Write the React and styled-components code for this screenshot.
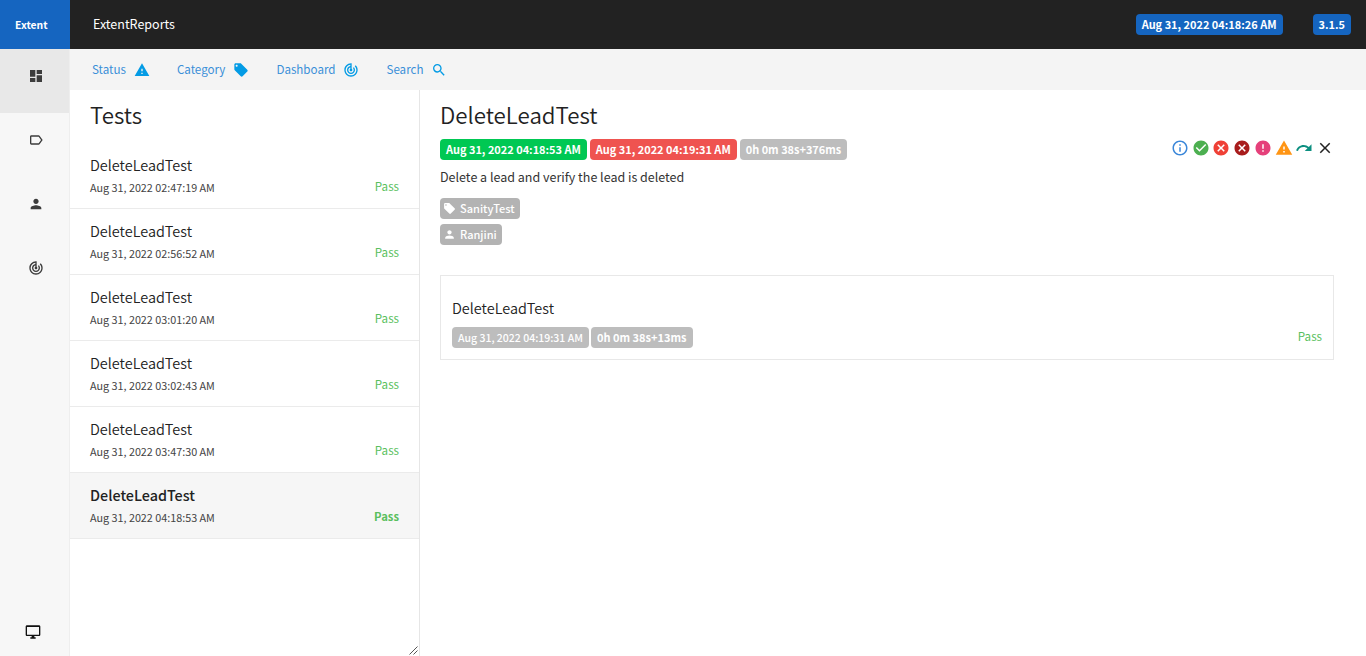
import React from 'react';
import styled, { createGlobalStyle } from 'styled-components';
import {
  MdDashboard, MdLabelOutline, MdPerson, MdTrackChanges, MdWarning,
  MdLocalOffer, MdSearch, MdInfoOutline, MdCheckCircle, MdCancel, MdError, MdRedo, MdClose,
} from 'react-icons/md';

const GlobalStyle = createGlobalStyle`
  *, *::before, *::after { box-sizing: border-box; }
  body {
    margin: 0;
    background: #fff;
    color: #222;
    font-family: "Noto Sans CJK SC", "Open Sans", sans-serif;
    font-size: 12.5px;
    overflow: hidden;
  }
  h1, h2, p, ul { margin: 0; padding: 0; font-weight: 400; list-style: none; }
  svg { display: block; flex: none; }
`;

const Page = styled.div`
  display: flex;
  flex-direction: column;
  height: 656px;
`;

const TopBar = styled.header`
  display: flex;
  align-items: center;
  height: 49px;
  flex: none;
  padding-right: 15px;
  background: #222;
  color: #fff;
`;

const Logo = styled.div`
  width: 70px;
  height: 49px;
  padding-left: 15px;
  background: #1565c0;
  font-size: 10.35px;
  font-weight: 700;
  line-height: 50px;
`;

const ReportName = styled.div`
  flex: 1;
  padding-left: 23px;
  font-size: 12.5px;
  line-height: 47px;
  height: 49px;
`;

const Badge = styled.span`
  display: inline-flex;
  align-items: center;
  height: 21px;
  padding: 0 6px;
  border-radius: 4px;
  background: ${(p) => p.$bg || '#bdbdbd'};
  color: #fff;
  font-size: ${(p) => p.$size || 10.95}px;
  font-weight: ${(p) => p.$weight || 700};
  line-height: 21px;
  white-space: nowrap;
`;

const TopBadges = styled.div`
  display: flex;
  gap: 30px;
`;

const Body = styled.div`
  display: flex;
  flex: 1;
  min-height: 0;
`;

const SideNav = styled.nav`
  display: flex;
  flex-direction: column;
  width: 70px;
  flex: none;
  background: #f7f7f7;
  border-right: 1px solid #eee;
  color: #3c3c3c;
`;

const SideItem = styled.a`
  display: flex;
  justify-content: center;
  height: 64px;
  padding: 19px 0 0 3px;
  background: ${(p) => (p.$active ? '#e8e8e8' : 'transparent')};
`;

const ThemeToggle = styled.a`
  margin-top: auto;
  padding: 0 0 16px 25px;
  color: #111;
`;

const Main = styled.main`
  display: flex;
  flex-direction: column;
  flex: 1;
  min-width: 0;
`;

const SubNav = styled.nav`
  display: flex;
  gap: 27px;
  height: 41px;
  flex: none;
  padding-left: 22px;
  background: #f4f4f4;
`;

const SubNavLink = styled.a`
  display: flex;
  height: 41px;
  align-items: center;
  gap: 8px;
  color: #3a8fd8;
  font-size: 11.6px;
  line-height: 39px;
  padding-bottom: 1px;

  svg { color: #039be5; margin-top: 2px; }
`;

const Columns = styled.div`
  display: flex;
  flex: 1;
  min-height: 0;
`;

const TestColumn = styled.section`
  position: relative;
  width: 350px;
  flex: none;
  border-right: 1px solid #e6e6e6;
`;

const ResizeGrip = styled.svg`
  position: absolute;
  right: 1px;
  bottom: 1px;
`;

const Heading = styled.h1`
  font-size: 22.3px;
  font-weight: 350;
  line-height: 34px;
`;

const TestsHeading = styled(Heading)`
  padding: 7px 20px 12px;
`;

const TestRow = styled.li`
  display: flex;
  justify-content: space-between;
  height: 66px;
  padding: 11px 20px 0;
  border-bottom: 1px solid #ebebeb;
  background: ${(p) => (p.$active ? '#f6f6f6' : '#fff')};
  font-weight: ${(p) => (p.$active ? 500 : 350)};
`;

const TestName = styled.div`
  font-size: ${(p) => (p.$active ? 14.35 : 14.45)}px;
  line-height: 22px;
`;

const TestTime = styled.div`
  color: #444;
  font-size: 10.79px;
  font-weight: 400;
  line-height: 22px;
`;

const Status = styled.span`
  align-self: flex-end;
  color: #5abf5e;
  font-size: ${(p) => (p.$active ? 11.3 : 11.6)}px;
  font-weight: ${(p) => (p.$active ? 700 : 400)};
  line-height: 20px;
`;

const RowStatus = styled(Status)`
  margin-bottom: 12px;
`;

const Details = styled.section`
  flex: 1;
  min-width: 0;
  padding: 7px 32px 0 20px;
`;

const MetaRow = styled.div`
  display: flex;
  align-items: center;
  justify-content: space-between;
  height: 21px;
  margin-top: 8px;
`;

const Badges = styled.div`
  display: flex;
  gap: ${(p) => p.$gap || 3}px;
`;

const StatusFilters = styled.div`
  display: flex;
  align-items: center;
  gap: 2.75px;
  margin: -3px 0 0;
`;

const Description = styled.p`
  margin-top: 6px;
  color: #333;
  font-size: 12.5px;
  line-height: 21px;
`;

const TagList = styled.div`
  display: flex;
  flex-direction: column;
  align-items: flex-start;
  gap: 5px;
  margin-top: 11px;
`;

const Tag = styled(Badge)`
  gap: 4px;
  padding: 0 5px 0 3px;
`;

const NodeCard = styled.article`
  display: flex;
  justify-content: space-between;
  height: 85px;
  margin-top: 30px;
  padding: 21px 11px 0;
  border: 1px solid #e8e8e8;
`;

const NodeName = styled.div`
  margin-bottom: 8px;
  font-size: 14.45px;
  font-weight: 350;
  line-height: 22px;
`;

const NodeStatus = styled(Status)`
  margin-bottom: 13px;
`;

const MonitorIcon = () => (
  <svg width="16" height="16" viewBox="0 0 24 24" fill="currentColor">
    <path d="M21 2H3c-1.1 0-2 .9-2 2v12c0 1.1.9 2 2 2h7v2H8v2h8v-2h-2v-2h7c1.1 0 2-.9 2-2V4c0-1.1-.9-2-2-2zm0 14H3V4.5h18V16z" />
  </svg>
);

const tests = [
  'Aug 31, 2022 02:47:19 AM',
  'Aug 31, 2022 02:56:52 AM',
  'Aug 31, 2022 03:01:20 AM',
  'Aug 31, 2022 03:02:43 AM',
  'Aug 31, 2022 03:47:30 AM',
  'Aug 31, 2022 04:18:53 AM',
];

const filters = [
  [MdInfoOutline, '#3b87d9'],
  [MdCheckCircle, '#4caf50'],
  [MdCancel, '#ef4036'],
  [MdCancel, '#a81c1c'],
  [MdError, '#e5407a'],
  [MdWarning, '#ff9514'],
  [MdRedo, '#0c8f80'],
  [MdClose, '#222'],
];

export default function App() {
  return (
    <Page>
      <GlobalStyle />
      <TopBar>
        <Logo>Extent</Logo>
        <ReportName>ExtentReports</ReportName>
        <TopBadges>
          <Badge $bg="#1565c0">Aug 31, 2022 04:18:26 AM</Badge>
          <Badge $bg="#1565c0">3.1.5</Badge>
        </TopBadges>
      </TopBar>
      <Body>
        <SideNav>
          <SideItem $active><MdDashboard size={16} /></SideItem>
          <SideItem><MdLabelOutline size={16} /></SideItem>
          <SideItem><MdPerson size={16} /></SideItem>
          <SideItem><MdTrackChanges size={16} /></SideItem>
          <ThemeToggle><MonitorIcon /></ThemeToggle>
        </SideNav>
        <Main>
          <SubNav>
            <SubNavLink>Status <MdWarning size={16} /></SubNavLink>
            <SubNavLink>Category <MdLocalOffer size={16} /></SubNavLink>
            <SubNavLink>Dashboard <MdTrackChanges size={16} /></SubNavLink>
            <SubNavLink>Search <MdSearch size={16} /></SubNavLink>
          </SubNav>
          <Columns>
            <TestColumn>
              <TestsHeading>Tests</TestsHeading>
              <ul>
                {tests.map((time, i) => {
                  const active = i === tests.length - 1;
                  return (
                    <TestRow key={time} $active={active}>
                      <div>
                        <TestName $active={active}>DeleteLeadTest</TestName>
                        <TestTime>{time}</TestTime>
                      </div>
                      <RowStatus $active={active}>Pass</RowStatus>
                    </TestRow>
                  );
                })}
              </ul>
              <ResizeGrip width="9" height="9" viewBox="0 0 9 9" stroke="#555" strokeWidth="1">
                <path d="M0.5 8.5 L8.5 0.5 M4.5 8.5 L8.5 4.5" fill="none" />
              </ResizeGrip>
            </TestColumn>
            <Details>
              <Heading>DeleteLeadTest</Heading>
              <MetaRow>
                <Badges>
                  <Badge $bg="#00c853">Aug 31, 2022 04:18:53 AM</Badge>
                  <Badge $bg="#ef5350">Aug 31, 2022 04:19:31 AM</Badge>
                  <Badge>0h 0m 38s+376ms</Badge>
                </Badges>
                <StatusFilters>
                  {filters.map(([Icon, color], i) => <Icon key={i} size={18} color={color} />)}
                </StatusFilters>
              </MetaRow>
              <Description>Delete a lead and verify the lead is deleted</Description>
              <TagList>
                <Tag $bg="#b3b3b3" $weight={500} $size={11}><MdLocalOffer size={13} />SanityTest</Tag>
                <Tag $bg="#b3b3b3" $weight={500} $size={11}><MdPerson size={13} />Ranjini</Tag>
              </TagList>
              <NodeCard>
                <div>
                  <NodeName>DeleteLeadTest</NodeName>
                  <Badges $gap={2}>
                    <Badge $weight={500} $size={10.5}>Aug 31, 2022 04:19:31 AM</Badge>
                    <Badge $size={11}>0h 0m 38s+13ms</Badge>
                  </Badges>
                </div>
                <NodeStatus>Pass</NodeStatus>
              </NodeCard>
            </Details>
          </Columns>
        </Main>
      </Body>
    </Page>
  );
}
